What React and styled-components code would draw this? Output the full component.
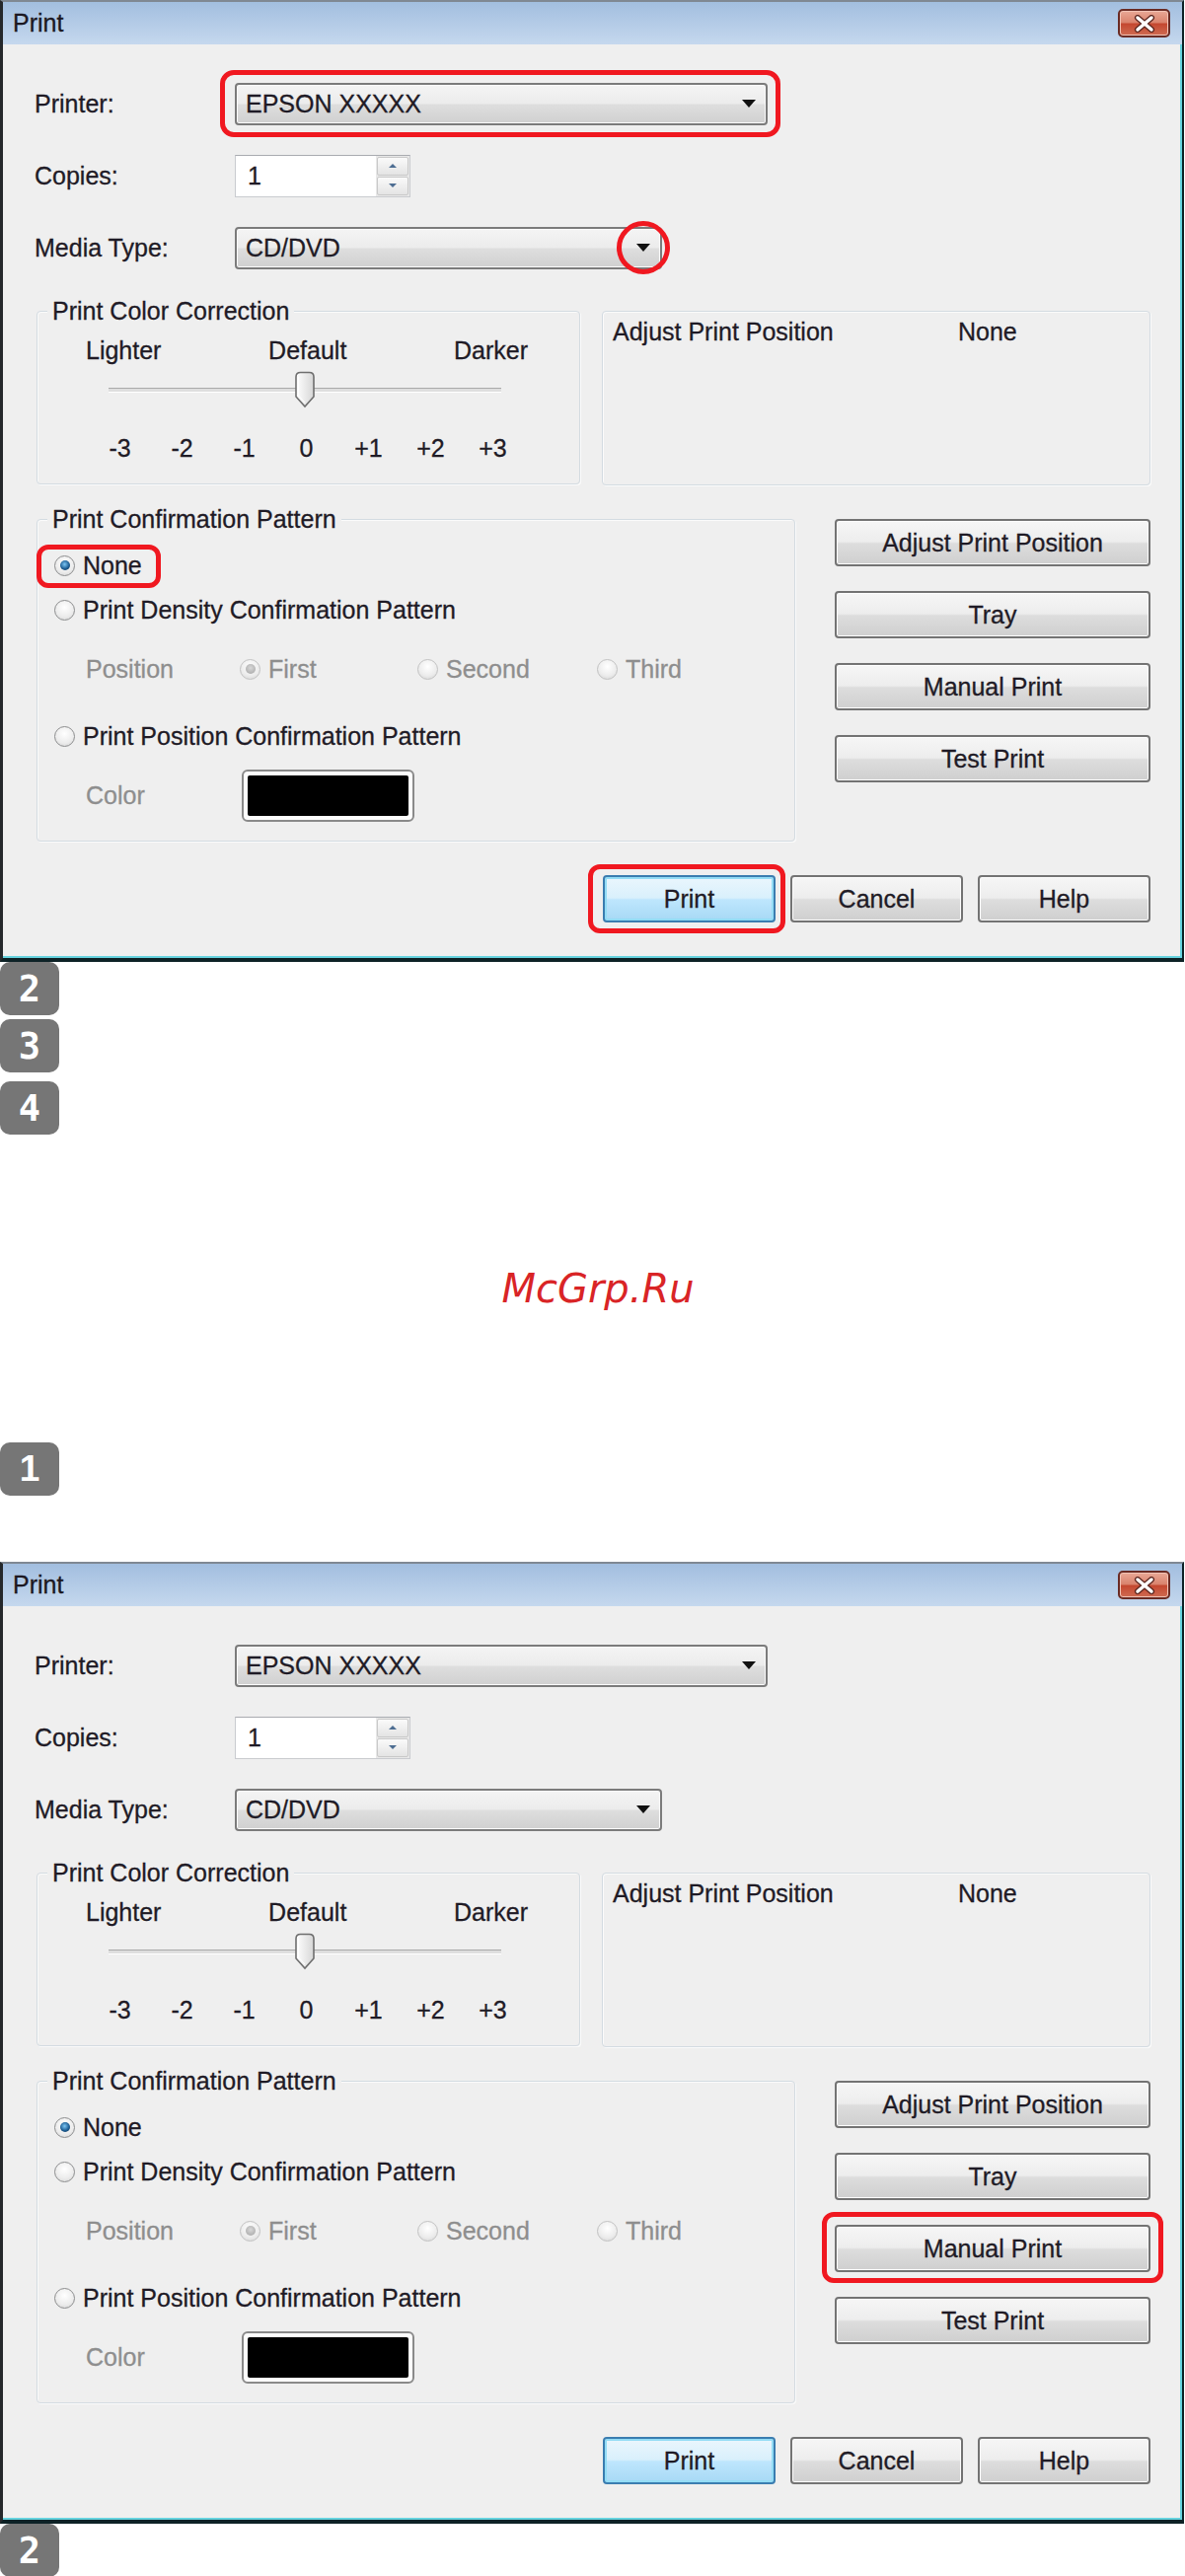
import React from "react";
import styled, { createGlobalStyle, css } from "styled-components";

const GlobalStyle = createGlobalStyle`
  html, body { margin: 0; padding: 0; background: #ffffff; }
  body { font-family: "Liberation Sans", Arial, sans-serif; color: #1f1b26; }
`;

const Page = styled.div`
  width: 1201px;
  display: flex;
  flex-direction: column;
  align-items: flex-start;
`;

const Window = styled.div`
  box-sizing: border-box;
  width: 1200px;
  height: 975px;
  margin-top: ${(p) => p.$mt || 0}px;
  display: flex;
  flex-direction: column;
  background: #efefef;
  border-top: 2px solid #7f8893;
  border-left: 3px solid #25282b;
  border-right: 2px solid #0d2226;
  border-bottom: 4px solid #0d2226;
  box-shadow: inset -2px -2px 0 #66d3df;
  -webkit-text-stroke: 0.3px currentColor;
`;

const TitleBar = styled.div`
  flex: none;
  height: 43px;
  display: flex;
  align-items: center;
  justify-content: space-between;
  padding: 0 12px 0 10px;
  background: linear-gradient(#a2bedf, #c5d8ee);
`;

const Title = styled.span`
  font-size: 25px;
  color: #1c1822;
`;

const CloseButton = styled.div`
  box-sizing: border-box;
  width: 53px;
  height: 29px;
  display: flex;
  align-items: center;
  justify-content: center;
  border: 2px solid #6a2b24;
  border-radius: 5px;
  background: linear-gradient(#e9a896 0%, #d9826c 48%, #c4472f 52%, #cf6b52 100%);
  box-shadow: inset 0 0 0 1px #f1c2b4;
`;

const Body = styled.div`
  flex: 1;
  display: flex;
  flex-direction: column;
  padding: 38px 32px 0 32px;
`;

const FormRow = styled.div`
  display: flex;
  align-items: center;
  height: 44px;
  & + & {
    margin-top: 29px;
  }
`;

const FieldLabel = styled.span`
  width: 203px;
  font-size: 25px;
`;

const Marked = styled.div`
  position: relative;
  display: inline-flex;
`;

const Ring = styled.span`
  position: absolute;
  pointer-events: none;
  top: ${(p) => -p.$t}px;
  left: ${(p) => -p.$l}px;
  right: ${(p) => -p.$r}px;
  bottom: ${(p) => -p.$b}px;
  border: 5px solid #f01820;
  border-radius: ${(p) => p.$radius};
`;

const Combo = styled.div`
  box-sizing: border-box;
  width: ${(p) => p.$w}px;
  height: 43px;
  display: flex;
  align-items: center;
  justify-content: space-between;
  padding: 0 10px 0 9px;
  border: 2px solid #7b7b7b;
  border-radius: 4px;
  background: linear-gradient(#f4f4f4 0%, #ececec 48%, #dedede 52%, #d0d0d0 100%);
  box-shadow: inset 0 0 0 1px #fafafa;
  font-size: 25px;
`;

const ArrowSlot = styled.span`
  position: relative;
  display: inline-flex;
  width: 14px;
  height: 8px;
`;

const DropArrow = styled.span`
  width: 0;
  height: 0;
  border-left: 7px solid transparent;
  border-right: 7px solid transparent;
  border-top: 8px solid #111;
`;

const Spin = styled.div`
  box-sizing: border-box;
  width: 178px;
  height: 43px;
  display: flex;
  border: 1px solid #c9cbcf;
  border-top-color: #a9abb0;
  background: #fff;
`;

const SpinValue = styled.div`
  flex: 1;
  display: flex;
  align-items: center;
  padding-left: 12px;
  font-size: 25px;
`;

const SpinButtons = styled.div`
  width: 32px;
  display: flex;
  flex-direction: column;
  gap: 1px;
  padding: 1px;
  background: #e8e8e8;
`;

const SpinBtn = styled.div`
  flex: 1;
  display: flex;
  align-items: center;
  justify-content: center;
  border: 1px solid #c9c9c9;
  border-radius: 2px;
  background: linear-gradient(#fafafa, #e4e4e4);
`;

const TinyTri = styled.span`
  width: 0;
  height: 0;
  border-left: 4px solid transparent;
  border-right: 4px solid transparent;
  ${(p) =>
    p.$up
      ? css`border-bottom: 4px solid #4d6d92;`
      : css`border-top: 4px solid #4d6d92;`}
`;

const SectionRow = styled.div`
  display: flex;
  align-items: flex-start;
  justify-content: space-between;
  margin-top: ${(p) => p.$mt}px;
  padding-left: 2px;
`;

const GroupBox = styled.div`
  position: relative;
  box-sizing: border-box;
  width: ${(p) => p.$w}px;
  height: ${(p) => p.$h}px;
  border: 1px solid #d3dbe1;
  border-radius: 4px;
  box-shadow: inset 1px 1px 0 #fbfbfb, 1px 1px 0 #fbfbfb;
  display: flex;
  flex-direction: column;
  padding: ${(p) => p.$pad};
`;

const Legend = styled.span`
  position: absolute;
  top: -15px;
  left: 10px;
  padding: 0 5px;
  background: #efefef;
  font-size: 25px;
  line-height: 28px;
`;

const ScaleLabels = styled.div`
  width: 448px;
  height: 28px;
  display: flex;
  justify-content: space-between;
  align-items: center;
  font-size: 25px;
`;

const Slider = styled.div`
  position: relative;
  width: 398px;
  height: 40px;
  margin: 6px 0 0 23px;
  display: flex;
  align-items: center;
  justify-content: center;
`;

const Track = styled.div`
  position: absolute;
  left: 0;
  right: 0;
  top: 18px;
  height: 3px;
  background: #dedede;
  border-top: 1px solid #a9a9a9;
  border-bottom: 1px solid #ffffff;
`;

const Thumb = styled.svg`
  position: relative;
  width: 22px;
  height: 38px;
`;

const Ticks = styled.div`
  display: flex;
  margin: 25px 0 0 3px;
`;

const Tick = styled.span`
  width: 63px;
  text-align: center;
  font-size: 25px;
  line-height: 28px;
`;

const InfoGrid = styled.div`
  display: grid;
  grid-template-columns: 350px auto;
  font-size: 25px;
`;

const OptionRow = styled.div`
  display: flex;
  align-items: center;
  height: 30px;
  margin-top: ${(p) => p.$mt}px;
  padding-left: ${(p) => p.$indent || 0}px;
`;

const Radio = styled.label`
  display: inline-flex;
  align-items: center;
  gap: 8px;
  font-size: 25px;
  color: ${(p) => (p.$disabled ? "#8e8e8e" : "inherit")};
  width: ${(p) => (p.$w ? `${p.$w}px` : "auto")};
`;

const RadioCircle = styled.span`
  box-sizing: border-box;
  width: 21px;
  height: 21px;
  border-radius: 50%;
  display: inline-flex;
  align-items: center;
  justify-content: center;
  border: 1px solid ${(p) => (p.$disabled ? "#c2c2c2" : "#8c8d8e")};
  background: radial-gradient(circle at 50% 35%, #ffffff 0%, #ececec 60%, #d0d0d0 100%);
  &::after {
    content: "";
    display: ${(p) => (p.$checked ? "block" : "none")};
    width: 10px;
    height: 10px;
    border-radius: 50%;
    background: ${(p) =>
      p.$disabled
        ? "radial-gradient(circle at 50% 40%, #d8d8d8 0%, #a2a2a2 100%)"
        : "radial-gradient(circle at 45% 40%, #7cc6f4 0%, #1e5f95 55%, #0a2a48 100%)"};
  }
`;

const DimLabel = styled.span`
  width: ${(p) => p.$w}px;
  font-size: 25px;
  color: #8e8e8e;
`;

const Swatch = styled.div`
  box-sizing: border-box;
  width: 175px;
  height: 53px;
  padding: 4px;
  border: 2px solid #8a8a8a;
  border-radius: 6px;
  background: #fdfdfd;
  &::before {
    content: "";
    display: block;
    width: 100%;
    height: 100%;
    background: #000;
    border-radius: 2px;
  }
`;

const ColorRow = styled.div`
  display: flex;
  align-items: center;
  margin-top: 19px;
  padding-left: 32px;
`;

const ButtonStack = styled.div`
  display: flex;
  flex-direction: column;
  gap: 25px;
`;

const Button = styled.div`
  box-sizing: border-box;
  width: ${(p) => p.$w}px;
  height: 48px;
  display: flex;
  align-items: center;
  justify-content: center;
  border: 2px solid #737373;
  border-radius: 4px;
  background: linear-gradient(#f6f6f6 0%, #ededed 48%, #dddddd 52%, #cfcfcf 100%);
  box-shadow: inset 0 0 0 1px #fcfcfc;
  font-size: 25px;
  ${(p) =>
    p.$default &&
    css`
      border-color: #3a7db0;
      background: linear-gradient(#eaf6fd 0%, #d9f0fc 48%, #bee6fd 52%, #a7d9f5 100%);
      box-shadow: inset 0 0 0 2px #93dcf5;
    `}
`;

const Footer = styled.div`
  display: flex;
  justify-content: flex-end;
  gap: 15px;
  margin-top: 34px;
`;

const Badge = styled.div`
  flex: none;
  width: 60px;
  height: 54px;
  margin-top: ${(p) => p.$mt || 0}px;
  border-radius: 10px;
  background: #767676;
  color: #ffffff;
  display: flex;
  align-items: center;
  justify-content: center;
  font-family: ${(p) =>
    p.$mono ? '"DejaVu Sans Mono", monospace' : '"Liberation Sans", sans-serif'};
  font-weight: bold;
  font-size: 37px;
`;

const Watermark = styled.div`
  align-self: stretch;
  margin-top: 132px;
  padding-left: 11px;
  text-align: center;
  font-family: "DejaVu Sans", sans-serif;
  font-style: oblique;
  font-size: 40px;
  line-height: 48px;
  color: #d92426;
`;

function CloseIcon() {
  return (
    <svg width="22" height="18" viewBox="0 0 22 18">
      <path d="M4 3 L18 15 M18 3 L4 15" stroke="#5a231c" strokeWidth="6" strokeLinecap="round" />
      <path d="M4 3 L18 15 M18 3 L4 15" stroke="#ffffff" strokeWidth="3.5" strokeLinecap="round" />
    </svg>
  );
}

function SliderThumb() {
  return (
    <Thumb viewBox="0 0 22 38">
      <defs>
        <linearGradient id="thumbFill" x1="0" y1="0" x2="1" y2="0">
          <stop offset="0" stopColor="#ffffff" />
          <stop offset="1" stopColor="#d6d6d6" />
        </linearGradient>
      </defs>
      <path
        d="M2 6 Q2 1.5 6.5 1.5 H15.5 Q20 1.5 20 6 V26 L11 36 L2 26 Z"
        fill="url(#thumbFill)"
        stroke="#6e6e6e"
        strokeWidth="1.6"
      />
      <path d="M4.5 6 V25 L11 32" fill="none" stroke="#ffffff" strokeWidth="1" />
    </Thumb>
  );
}

function RadioOption({ children, checked, disabled, w }) {
  return (
    <Radio $disabled={disabled} $w={w}>
      <RadioCircle $checked={checked} $disabled={disabled} />
      {children}
    </Radio>
  );
}

function PrintDialog({ marks = {}, mt }) {
  return (
    <Window $mt={mt}>
      <TitleBar>
        <Title>Print</Title>
        <CloseButton>
          <CloseIcon />
        </CloseButton>
      </TitleBar>
      <Body>
        <FormRow>
          <FieldLabel>Printer:</FieldLabel>
          <Marked>
            <Combo $w={540}>
              <span>EPSON XXXXX</span>
              <ArrowSlot>
                <DropArrow />
              </ArrowSlot>
            </Combo>
            {marks.printer && <Ring $t={13} $l={15} $r={13} $b={12} $radius="14px" />}
          </Marked>
        </FormRow>
        <FormRow>
          <FieldLabel>Copies:</FieldLabel>
          <Spin>
            <SpinValue>1</SpinValue>
            <SpinButtons>
              <SpinBtn>
                <TinyTri $up />
              </SpinBtn>
              <SpinBtn>
                <TinyTri />
              </SpinBtn>
            </SpinButtons>
          </Spin>
        </FormRow>
        <FormRow>
          <FieldLabel>Media Type:</FieldLabel>
          <Combo $w={433}>
            <span>CD/DVD</span>
            <ArrowSlot>
              <DropArrow />
              {marks.media && <Ring $t={23} $l={20} $r={20} $b={23} $radius="50%" />}
            </ArrowSlot>
          </Combo>
        </FormRow>

        <SectionRow $mt={42}>
          <GroupBox $w={551} $h={176} $pad="25px 0 0 49px">
            <Legend>Print Color Correction</Legend>
            <ScaleLabels>
              <span>Lighter</span>
              <span>Default</span>
              <span>Darker</span>
            </ScaleLabels>
            <Slider>
              <Track />
              <SliderThumb />
            </Slider>
            <Ticks>
              {["-3", "-2", "-1", "0", "+1", "+2", "+3"].map((t) => (
                <Tick key={t}>{t}</Tick>
              ))}
            </Ticks>
          </GroupBox>
          <GroupBox $w={556} $h={177} $pad="6px 0 0 10px">
            <InfoGrid>
              <span>Adjust Print Position</span>
              <span>None</span>
            </InfoGrid>
          </GroupBox>
        </SectionRow>

        <SectionRow $mt={34}>
          <GroupBox $w={769} $h={327} $pad="31px 0 0 17px">
            <Legend>Print Confirmation Pattern</Legend>
            <OptionRow $mt={0}>
              <Marked>
                <RadioOption checked>None</RadioOption>
                {marks.none && <Ring $t={7} $l={18} $r={19} $b={8} $radius="12px" />}
              </Marked>
            </OptionRow>
            <OptionRow $mt={15}>
              <RadioOption>Print Density Confirmation Pattern</RadioOption>
            </OptionRow>
            <OptionRow $mt={30} $indent={32}>
              <DimLabel $w={156}>Position</DimLabel>
              <RadioOption disabled checked w={180}>
                First
              </RadioOption>
              <RadioOption disabled w={182}>
                Second
              </RadioOption>
              <RadioOption disabled>Third</RadioOption>
            </OptionRow>
            <OptionRow $mt={38}>
              <RadioOption>Print Position Confirmation Pattern</RadioOption>
            </OptionRow>
            <ColorRow>
              <DimLabel $w={158}>Color</DimLabel>
              <Swatch />
            </ColorRow>
          </GroupBox>
          <ButtonStack>
            <Button $w={320}>Adjust Print Position</Button>
            <Button $w={320}>Tray</Button>
            <Marked>
              <Button $w={320}>Manual Print</Button>
              {marks.manual && <Ring $t={13} $l={13} $r={13} $b={11} $radius="12px" />}
            </Marked>
            <Button $w={320}>Test Print</Button>
          </ButtonStack>
        </SectionRow>

        <Footer>
          <Marked>
            <Button $w={175} $default>
              Print
            </Button>
            {marks.print && <Ring $t={11} $l={15} $r={10} $b={11} $radius="12px" />}
          </Marked>
          <Button $w={175}>Cancel</Button>
          <Button $w={175}>Help</Button>
        </Footer>
      </Body>
    </Window>
  );
}

export default function App() {
  return (
    <>
      <GlobalStyle />
      <Page>
        <PrintDialog marks={{ printer: true, media: true, none: true, print: true }} />
        <Badge $mono>2</Badge>
        <Badge $mono $mt={4}>3</Badge>
        <Badge $mono $mt={9}>4</Badge>
        <Watermark>McGrp.Ru</Watermark>
        <Badge $mt={132}>1</Badge>
        <PrintDialog marks={{ manual: true }} mt={67} />
        <Badge $mono>2</Badge>
      </Page>
    </>
  );
}
